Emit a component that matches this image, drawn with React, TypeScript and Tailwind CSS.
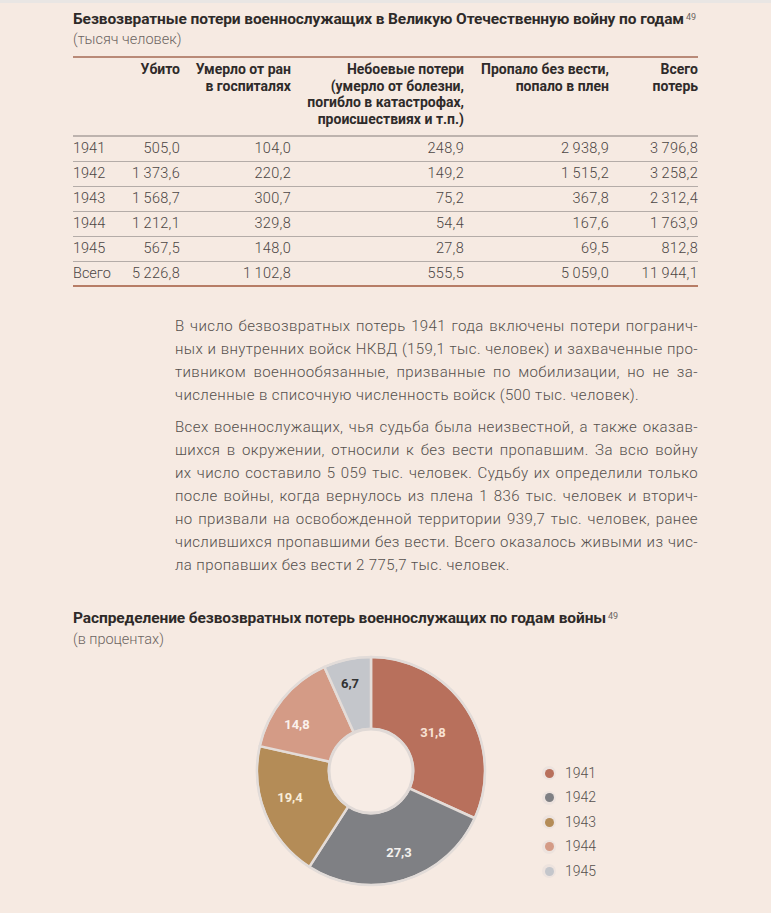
import React from 'react';

// --- Data ---
const T = '\u2009';

const rows: string[][] = [
  ['1941', '505,0', '104,0', '248,9', `2${T}938,9`, `3${T}796,8`],
  ['1942', `1${T}373,6`, '220,2', '149,2', `1${T}515,2`, `3${T}258,2`],
  ['1943', `1${T}568,7`, '300,7', '75,2', '367,8', `2${T}312,4`],
  ['1944', `1${T}212,1`, '329,8', '54,4', '167,6', `1${T}763,9`],
  ['1945', '567,5', '148,0', '27,8', '69,5', '812,8'],
  ['Всего', `5${T}226,8`, `1${T}102,8`, '555,5', `5${T}059,0`, `11${T}944,1`],
];

const headers: string[][] = [
  [],
  ['Убито'],
  ['Умерло от ран', 'в госпиталях'],
  ['Небоевые потери', '(умерло от болезни,', 'погибло в катастрофах,', 'происшествиях и т.п.)'],
  ['Пропало без вести,', 'попало в плен'],
  ['Всего', 'потерь'],
];

const para1 = [
  'В число безвозвратных потерь 1941 года включены потери погранич-',
  'ных и внутренних войск НКВД (159,1 тыс. человек) и захваченные про-',
  'тивником военнообязанные, призванные по мобилизации, но не за-',
  'численные в списочную численность войск (500 тыс. человек).',
];

const para2 = [
  'Всех военнослужащих, чья судьба была неизвестной, а также оказав-',
  'шихся в окружении, относили к без вести пропавшим. За всю войну',
  'их число составило 5 059 тыс. человек. Судьбу их определили только',
  'после войны, когда вернулось из плена 1 836 тыс. человек и вторич-',
  'но призвали на освобожденной территории 939,7 тыс. человек, ранее',
  'числившихся пропавшими без вести. Всего оказалось живыми из чис-',
  'ла пропавших без вести 2 775,7 тыс. человек.',
];

const slices = [
  { year: '1941', value: 31.8, color: '#b8705c', text: '#f8e2d4', lx: 62, ly: -39 },
  { year: '1942', value: 27.3, color: '#7f8084', text: '#f4f1ee', lx: 28, ly: 81 },
  { year: '1943', value: 19.4, color: '#b48c57', text: '#f8ecd8', lx: -81, ly: 26 },
  { year: '1944', value: 14.8, color: '#d49b86', text: '#fbf1ec', lx: -74, ly: -47 },
  { year: '1945', value: 6.7, color: '#c4c6cb', text: '#333333', lx: -21, ly: -88 },
];

// --- Donut chart ---
const C = 118;
const R = 114;
const r = 42;

const point = (rad: number, frac: number) => {
  const a = frac * Math.PI * 2;
  return [C + rad * Math.sin(a), C - rad * Math.cos(a)];
};

const arcPath = (from: number, to: number) => {
  const large = to - from > 0.5 ? 1 : 0;
  const [x1, y1] = point(R, from);
  const [x2, y2] = point(R, to);
  const [x3, y3] = point(r, to);
  const [x4, y4] = point(r, from);
  return `M${x1} ${y1} A${R} ${R} 0 ${large} 1 ${x2} ${y2} L${x3} ${y3} A${r} ${r} 0 ${large} 0 ${x4} ${y4} Z`;
};

const Donut = () => {
  let acc = 0;
  return (
    <svg width={236} height={236} viewBox="0 0 236 236" className="block">
      {slices.map((s) => {
        const from = acc / 100;
        acc += s.value;
        const to = acc / 100;
        return (
          <path key={s.year} d={arcPath(from, to)} fill={s.color} stroke="#e4dcd8" strokeWidth={2.5} strokeLinejoin="round" />
        );
      })}
      <circle cx={C} cy={C} r={R} fill="none" stroke="#e2dcd9" strokeWidth={2} />
      <circle cx={C} cy={C} r={r} fill="#f7ece5" stroke="#e0d9d6" strokeWidth={3} />
      {slices.map((s) => (
        <text
          key={s.year}
          x={C + s.lx}
          y={C + s.ly}
          fill={s.text}
          fontSize={13}
          fontWeight={700}
          fontFamily="Roboto, sans-serif"
          textAnchor="middle"
          dominantBaseline="central"
        >
          {s.value.toFixed(1).replace('.', ',')}
        </text>
      ))}
    </svg>
  );
};

const Sup = () => <sup className="text-[9px] font-normal text-[#6b6461] ml-[2px] relative -top-[4px]">49</sup>;

const App = () => {
  return (
    <div className="min-h-screen w-[771px] bg-[#f6eae2] font-['Roboto',sans-serif] text-[#3a3533]">
      <div className="h-[3px] bg-[#e9e6e4]" />

      {/* Table block */}
      <div className="ml-[73px] w-[625px] pt-[6px]">
        <h1 className="text-[15.5px] leading-[20px] font-bold text-[#2e2a29] tracking-[-0.1px]">
          Безвозвратные потери военнослужащих в Великую Отечественную войну по годам<Sup />
        </h1>
        <div className="text-[14.5px] leading-[20px] mt-[1px] font-light text-[#6c6461]">(тысяч человек)</div>

        <div className="mt-[6px] border-t-2 border-[#b98a78]">
          <div className="grid grid-cols-[52px_55px_111px_173px_145px_89px] pt-[3px] pb-[8px] border-b-2 border-[#bdb3ae]">
            {headers.map((h, i) => (
              <div key={i} className="text-right text-[14px] leading-[16.5px] font-bold text-[#2f2b2a]">
                {h.map((l) => (
                  <div key={l}>{l}</div>
                ))}
              </div>
            ))}
          </div>
          {rows.map((row, ri) => (
            <div
              key={row[0]}
              className={
                ri === rows.length - 1
                  ? 'grid grid-cols-[52px_55px_111px_173px_145px_89px] h-[25px] items-center border-b-2 border-[#b77d66]'
                  : 'grid grid-cols-[52px_55px_111px_173px_145px_89px] h-[25px] items-center border-b border-[#b4aca8]'
              }
            >
              {row.map((c, ci) => (
                <div
                  key={ci}
                  className={
                    ci === 0
                      ? 'text-left text-[14.5px] font-light text-[#4c4644]'
                      : 'text-right text-[14.5px] tracking-[0.3px] font-light text-[#4c4644]'
                  }
                >
                  {c}
                </div>
              ))}
            </div>
          ))}
        </div>
      </div>

      {/* Text block */}
      <div className="ml-[175px] w-[523px] mt-[28px] text-[15px] tracking-[0.4px] leading-[23px] font-light text-[#55504d]">
        <div>
          {para1.map((l, i) => (
            <div key={i} className={i < para1.length - 1 ? 'text-justify [text-align-last:justify]' : ''}>
              {l}
            </div>
          ))}
        </div>
        <div className="mt-[9px]">
          {para2.map((l, i) => (
            <div key={i} className={i < para2.length - 1 ? 'text-justify [text-align-last:justify]' : ''}>
              {l}
            </div>
          ))}
        </div>
      </div>

      {/* Chart block */}
      <div className="ml-[73px] mt-[31px]">
        <h2 className="text-[15.5px] leading-[20px] font-bold text-[#2e2a29] tracking-[-0.1px]">
          Распределение безвозвратных потерь военнослужащих по годам войны<Sup />
        </h2>
        <div className="text-[14.5px] leading-[20px] mt-[2px] font-light text-[#6c6461]">(в процентах)</div>
      </div>

      <div className="flex mt-[3px] pb-[20px]">
        <div className="ml-[253px]">
          <Donut />
        </div>
        <div className="ml-[53px] mt-[108px] flex flex-col">
          {slices.map((s) => (
            <div key={s.year} className="flex items-center h-[24.5px]">
              <span className="flex items-center justify-center w-[14px] h-[14px] rounded-full bg-[#ede3de]">
                <span className="block w-[9px] h-[9px] rounded-full" style={{ backgroundColor: s.color }} />
              </span>
              <span className="ml-[9px] text-[14px] font-light text-[#55504d]">{s.year}</span>
            </div>
          ))}
        </div>
      </div>
    </div>
  );
};

export default App;
